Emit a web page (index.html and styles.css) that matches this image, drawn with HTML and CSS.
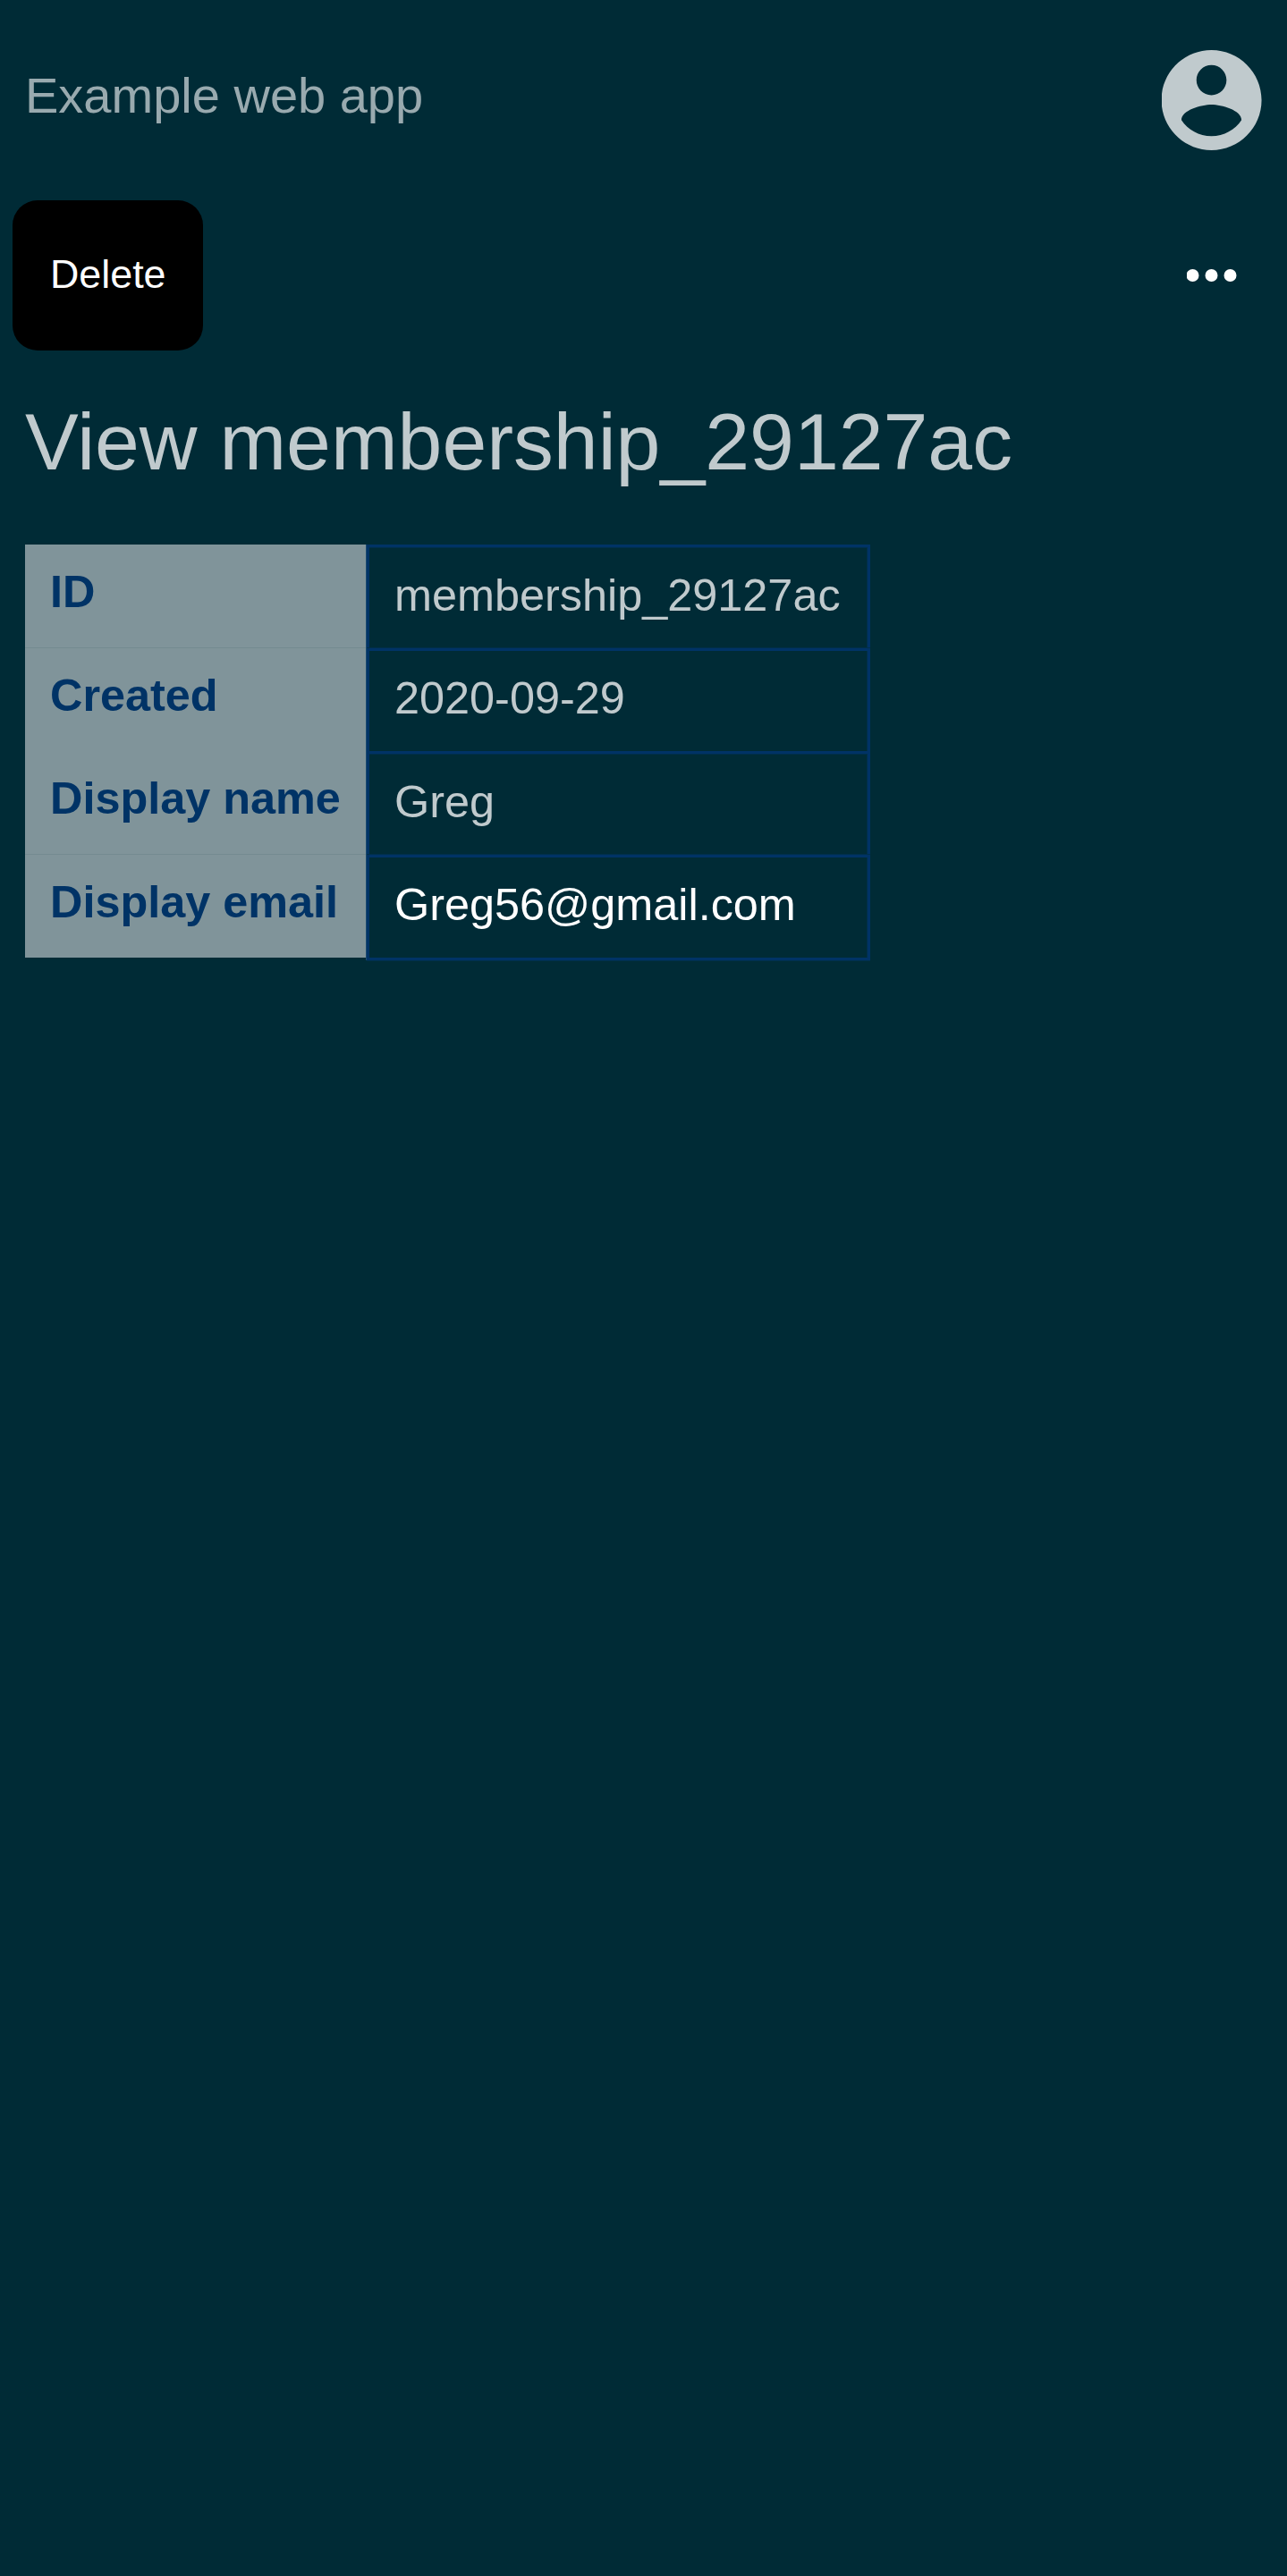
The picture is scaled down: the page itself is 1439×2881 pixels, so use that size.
FILE: index.html
```html
<!DOCTYPE html>
<html lang="en">
<head>
<meta charset="utf-8">
<title>Example web app</title>
<link rel="stylesheet" href="styles.css">
</head>
<body>
<header class="header">
  <div class="brand">Example web app</div>
  <svg class="account" viewBox="2.08 2 20 20" role="img" aria-label="Account"><path d="M12 2C6.48 2 2 6.48 2 12s4.48 10 10 10 10-4.48 10-10S17.52 2 12 2zm0 3c1.66 0 3 1.34 3 3s-1.34 3-3 3-3-1.34-3-3 1.34-3 3-3zm0 14.2c-2.5 0-4.71-1.28-6-3.22.03-1.99 4-3.08 6-3.08 1.99 0 5.97 1.09 6 3.08-1.29 1.94-3.5 3.22-6 3.22z"/></svg>
</header>
<nav class="toolbar">
  <button class="delete" type="button">Delete</button>
  <svg class="more" viewBox="0.5 0 56 14" role="img" aria-label="More"><circle cx="7" cy="7" r="7"/><circle cx="28" cy="7" r="7"/><circle cx="49" cy="7" r="7"/></svg>
</nav>
<main class="content">
  <h1 class="title">View membership_29127ac</h1>
  <dl class="details">
    <dt class="label">ID</dt><dd class="value">membership_29127ac</dd>
    <dt class="label">Created</dt><dd class="value">2020-09-29</dd>
    <dt class="label">Display name</dt><dd class="value">Greg</dd>
    <dt class="label">Display email</dt><dd class="value"><a class="mail">Greg56@gmail.com</a></dd>
  </dl>
</main>
</body>
</html>
```
FILE: styles.css
```css
* { box-sizing: border-box; }
body {
  margin: 0;
  min-height: 100vh;
  background: #002b36;
  color: #c0cacd;
  font-family: "Liberation Sans", Arial, sans-serif;
}
.header {
  display: flex;
  justify-content: space-between;
  height: 224px;
  padding: 56px 28px;
}
.brand { padding-top: 19px; font-size: 56px; line-height: 64px; color: #99aaaf; }
.account { width: 112px; height: 112px; fill: #c0cacd; }
.toolbar {
  display: flex;
  align-items: center;
  justify-content: space-between;
  padding: 0 56px 0 14px;
}
.delete {
  height: 168px;
  padding: 0 41.7px 3px 42px;
  border: 0;
  border-radius: 28px;
  background: #000;
  color: #fff;
  font: 44.8px "Liberation Sans", Arial, sans-serif;
}
.more { width: 56px; height: 14px; fill: #fff; }
.content { padding: 51px 28px 0; }
.title { margin: 0; font-size: 89.6px; font-weight: 400; line-height: 102px; }
.details {
  display: grid;
  grid-template-columns: 381px auto;
  grid-template-rows: repeat(4, 115.5px);
  width: max-content;
  margin: 64px 0 0;
  font-size: 50.4px;
  line-height: 58px;
}
.label { padding: 24px 28px 0; background: #80949a; color: #036; font-weight: 700; }
.label:nth-of-type(even) { box-shadow: 0 -1px #748b90; }
.value {
  height: 118.5px;
  margin: 0 0 0 1px;
  padding: 25px 30.4px 0 28px;
  border: 3px solid #036;
  box-shadow: -1px 0 #1a4a70, inset 0 1px #002f4a, inset -1px 0 #002f4a;
}
.value:nth-of-type(even) {
  padding-top: 24px;
  box-shadow: -1px 0 #1a4a70, 0 -1px #002f4a, inset -1px 0 #002f4a;
}
.value:last-child { box-shadow: -1px 0 #1a4a70, 0 -1px #002f4a, 0 1px #002f4a, inset -1px 0 #002f4a; }
.mail { color: #fff; }
```
